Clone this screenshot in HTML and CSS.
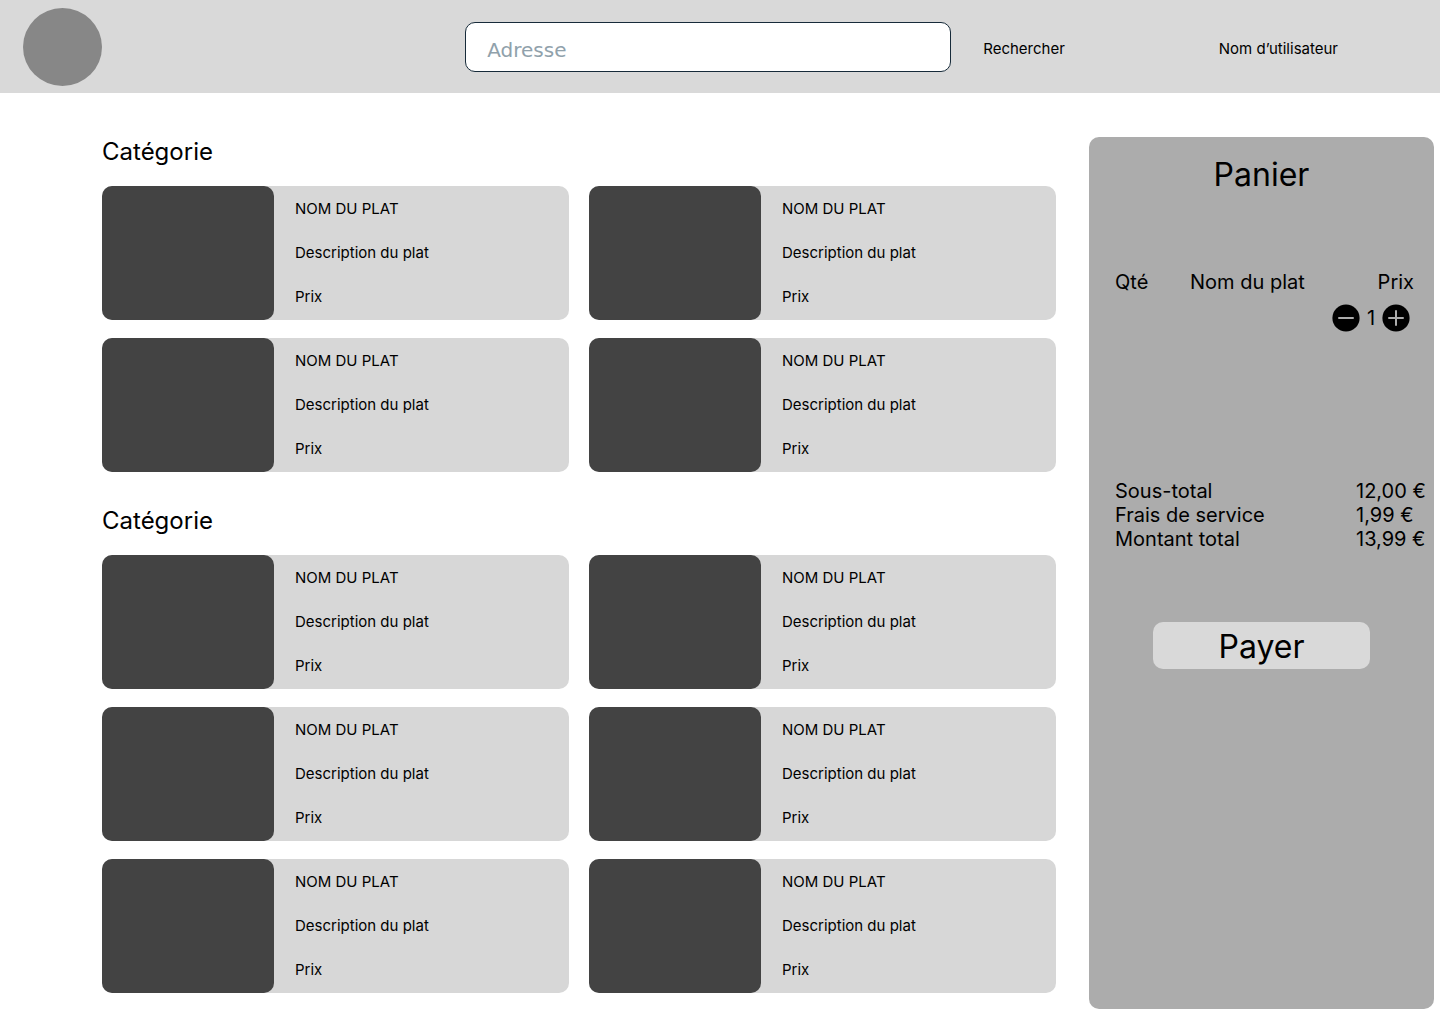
FILE: index.html
```html
<!DOCTYPE html>
<html lang="fr">
<head>
  <meta charset="utf-8">
  <meta name="viewport" content="width=device-width, initial-scale=1">
  <title>Commander</title>
  <link rel="stylesheet" href="styles.css">
</head>
<body>
  <header class="topbar">
    <div class="logo"></div>
    <form class="search">
      <input class="search-input" type="text" placeholder="Adresse" aria-label="Adresse">
      <button class="link-button" type="button">Rechercher</button>
    </form>
    <a class="user" href="#">Nom d’utilisateur</a>
  </header>

  <main class="page">
    <div class="menu">
      <section class="category">
        <h2 class="category-title">Catégorie</h2>
        <div class="dishes">
          <article class="dish"><div class="dish-photo"></div><div class="dish-text"><h3>NOM DU PLAT</h3><p>Description du plat</p><p>Prix</p></div></article>
          <article class="dish"><div class="dish-photo"></div><div class="dish-text"><h3>NOM DU PLAT</h3><p>Description du plat</p><p>Prix</p></div></article>
          <article class="dish"><div class="dish-photo"></div><div class="dish-text"><h3>NOM DU PLAT</h3><p>Description du plat</p><p>Prix</p></div></article>
          <article class="dish"><div class="dish-photo"></div><div class="dish-text"><h3>NOM DU PLAT</h3><p>Description du plat</p><p>Prix</p></div></article>
        </div>
      </section>
      <section class="category">
        <h2 class="category-title">Catégorie</h2>
        <div class="dishes">
          <article class="dish"><div class="dish-photo"></div><div class="dish-text"><h3>NOM DU PLAT</h3><p>Description du plat</p><p>Prix</p></div></article>
          <article class="dish"><div class="dish-photo"></div><div class="dish-text"><h3>NOM DU PLAT</h3><p>Description du plat</p><p>Prix</p></div></article>
          <article class="dish"><div class="dish-photo"></div><div class="dish-text"><h3>NOM DU PLAT</h3><p>Description du plat</p><p>Prix</p></div></article>
          <article class="dish"><div class="dish-photo"></div><div class="dish-text"><h3>NOM DU PLAT</h3><p>Description du plat</p><p>Prix</p></div></article>
          <article class="dish"><div class="dish-photo"></div><div class="dish-text"><h3>NOM DU PLAT</h3><p>Description du plat</p><p>Prix</p></div></article>
          <article class="dish"><div class="dish-photo"></div><div class="dish-text"><h3>NOM DU PLAT</h3><p>Description du plat</p><p>Prix</p></div></article>
        </div>
      </section>
    </div>

    <aside class="cart">
      <h2 class="cart-title">Panier</h2>
      <div class="cart-items">
        <div class="cart-line"><span>Qté</span><span>Nom du plat</span><span>Prix</span></div>
        <div class="stepper">
          <button class="step" type="button" aria-label="Retirer un">
            <svg viewBox="0 0 28 28" width="28" height="28" aria-hidden="true"><circle cx="14" cy="14" r="13.6"/><path class="sign" d="M7 14H21"/></svg>
          </button>
          <span class="count">1</span>
          <button class="step" type="button" aria-label="Ajouter un">
            <svg viewBox="0 0 28 28" width="28" height="28" aria-hidden="true"><circle cx="14" cy="14" r="13.6"/><path class="sign" d="M7 14H21M14 7V21"/></svg>
          </button>
        </div>
      </div>
      <dl class="totals">
        <dt>Sous-total</dt><dd>12,00 €</dd>
        <dt>Frais de service</dt><dd>1,99 €</dd>
        <dt>Montant total</dt><dd>13,99 €</dd>
      </dl>
      <button class="pay" type="button">Payer</button>
    </aside>
  </main>
</body>
</html>
```
FILE: styles.css
```css
* {
  box-sizing: border-box;
  margin: 0;
}

body {
  background: #fff;
  color: #000;
  font: 400 15px/18px Inter, sans-serif;
}

h2,
h3 {
  font-weight: 400;
}

h3 {
  font-size: 15px;
}

button {
  border: 0;
  padding: 0;
  background: none;
  color: inherit;
  font: inherit;
  cursor: pointer;
}

.topbar {
  display: flex;
  align-items: center;
  padding: 8px 102px 7px 23px;
  background: #d9d9d9;
}

.logo {
  width: 79px;
  height: 78px;
  margin-right: auto;
  border-radius: 50%;
  background: #878787;
}

.search {
  display: flex;
  align-items: center;
  gap: 32px;
  margin-right: 154px;
}

.search-input {
  width: 486px;
  height: 50px;
  padding: 6px 21px 0;
  border: 1px solid #172b3a;
  border-radius: 10px;
  background: #fff;
  font: 400 20px/24px "DejaVu Sans", sans-serif;
}

.search-input::placeholder {
  color: #90a1ab;
  opacity: 1;
}

.link-button,
.user {
  padding-top: 3px;
}

.user {
  color: inherit;
  text-decoration: none;
}

.page {
  display: grid;
  grid-template-columns: 1fr 345px;
  gap: 33px;
  padding: 44px 6px 15px 102px;
}

.menu {
  display: flex;
  flex-direction: column;
  gap: 34px;
  padding-bottom: 16px;
}

.category-title {
  margin-bottom: 20px;
  font-size: 24px;
  line-height: 29px;
}

.dishes {
  display: grid;
  grid-template-columns: 1fr 1fr;
  gap: 18px 20px;
}

.dish {
  display: flex;
  gap: 21px;
  border-radius: 10px;
  background: #d7d7d7;
}

.dish-photo {
  width: 172px;
  border-radius: 10px;
  background: #434343;
}

.dish-text {
  display: flex;
  flex-direction: column;
  gap: 26px;
  padding: 14px 0;
}

.cart {
  display: flex;
  flex-direction: column;
  padding-top: 18px;
  border-radius: 10px;
  background: #acacac;
  font-size: 20px;
  line-height: 24px;
}

.cart-title {
  margin-bottom: 76px;
  font-size: 32px;
  line-height: 39px;
  text-align: center;
}

.cart-items {
  padding: 0 20px 0 26px;
}

.cart-line {
  display: grid;
  grid-template-columns: 75px 1fr auto;
}

.stepper {
  display: flex;
  align-items: center;
  justify-content: flex-end;
  gap: 6px;
  margin-top: 10px;
  padding-right: 4px;
}

.step {
  display: flex;
}

.count {
  min-width: 10px;
  text-align: center;
}

.sign {
  fill: none;
  stroke: #acacac;
  stroke-width: 2;
  stroke-linecap: round;
}

.totals {
  display: grid;
  grid-template-columns: 1fr 78px;
  margin-top: 147px;
  padding-left: 26px;
}

.pay {
  width: 217px;
  height: 47px;
  margin: 71px auto 0;
  padding-top: 2px;
  border-radius: 10px;
  background: #d9d9d9;
  font-size: 32px;
  line-height: 39px;
}
```
